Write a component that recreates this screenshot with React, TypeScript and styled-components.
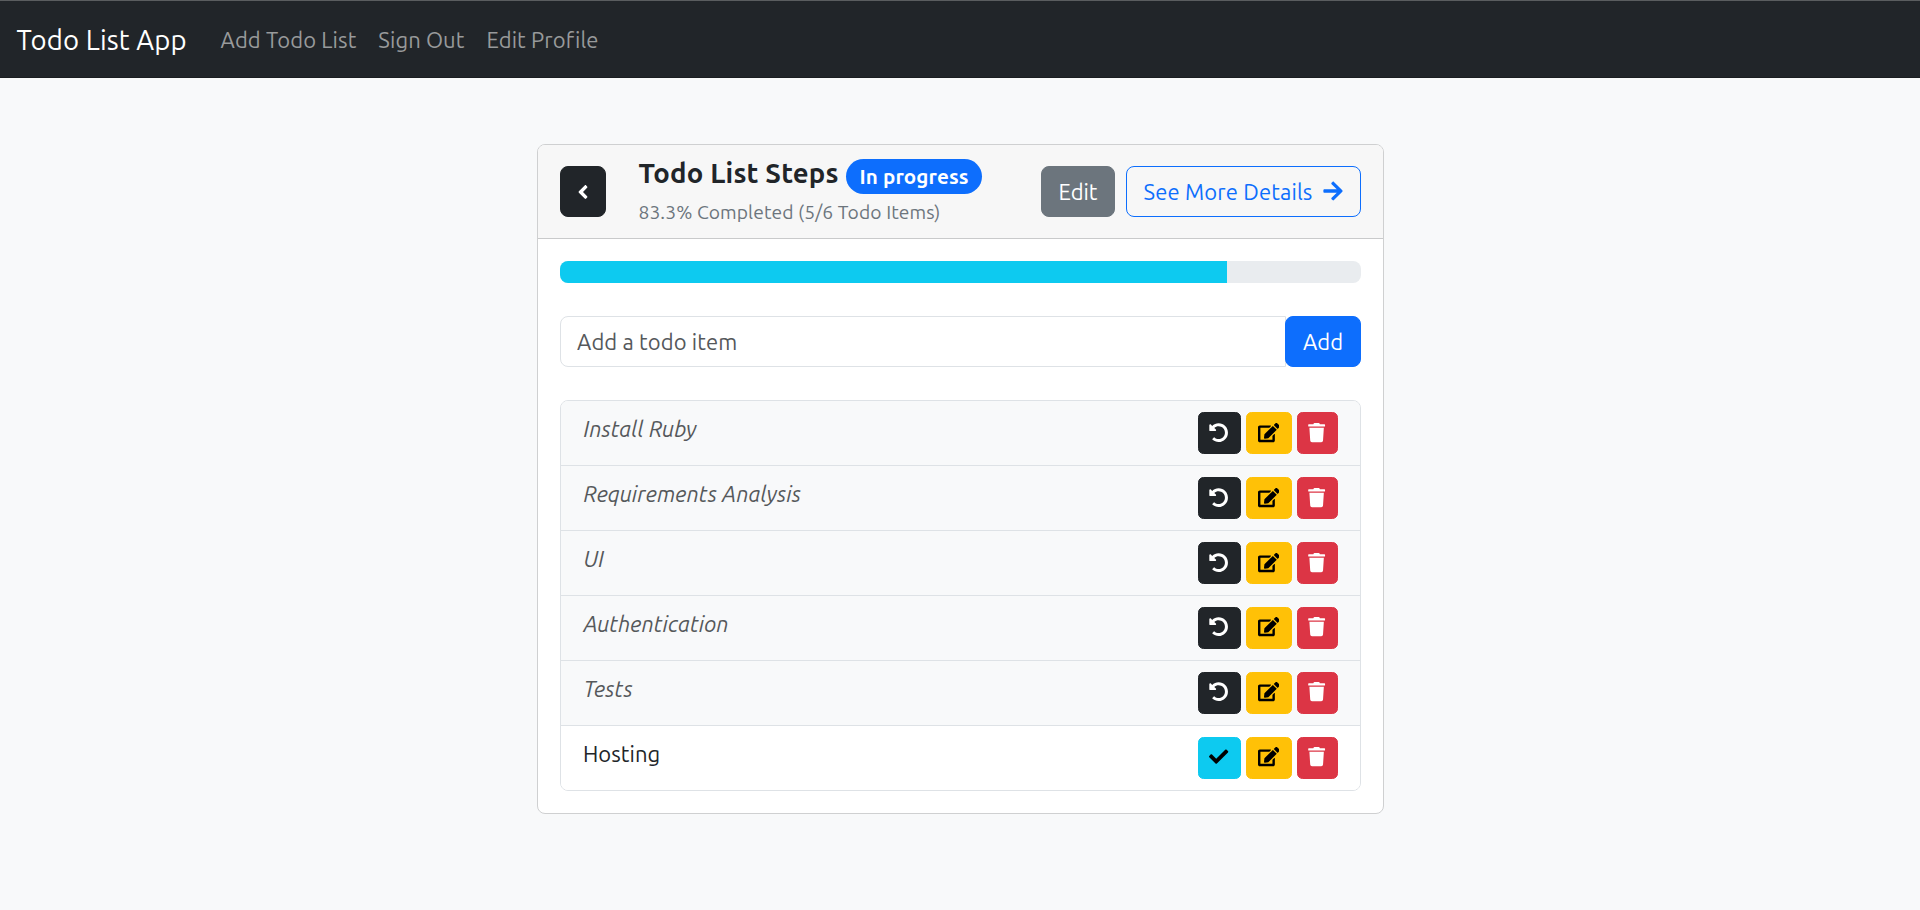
import React from "react";
import styled, { createGlobalStyle } from "styled-components";
import { FaAngleLeft, FaArrowRight, FaCheck, FaEdit, FaTrash, FaUndoAlt } from "react-icons/fa";

const GlobalStyle = createGlobalStyle`
  *, *::before, *::after { box-sizing: border-box; }
  html { font-size: 22px; }
  body {
    margin: 0;
    min-height: 910px;
    background: #f8f9fa;
    color: #212529;
    font-family: Ubuntu, "Noto Sans", sans-serif;
    font-size: 22px;
    line-height: 33px;
  }
  button, input { font: inherit; }
`;

type Tracked = { $track?: number };

const Label = styled.span<Tracked>`
  letter-spacing: ${({ $track = 0 }) => $track}px;
  margin-right: ${({ $track = 0 }) => -$track}px;
  white-space: nowrap;
`;

const Navbar = styled.nav`
  display: flex;
  align-items: center;
  height: 78px;
  padding: 1px 16.5px 0;
  border-top: 1px solid #5a5d5f;
  border-bottom: 1px solid #1a1d20;
  background: #212529;
`;

const Brand = styled.a`
  width: 204px;
  color: #fff;
  font-size: 27.5px;
`;

const NavLinks = styled.div`
  display: flex;
  gap: 22px;
  color: #989a9b;
`;

const Page = styled.main`
  display: flex;
  justify-content: center;
  padding-top: 66px;
`;

const Card = styled.section`
  width: 847px;
  margin-left: 1px;
  border: 1px solid #cfd0d1;
  border-radius: 8px;
  background: #fff;
  overflow: hidden;
`;

const CardHeader = styled.header`
  display: flex;
  align-items: center;
  height: 94px;
  padding: 0 22px;
  border-bottom: 1px solid #c9cacb;
  background: #f7f7f7;
`;

const Heading = styled.div`
  flex: 1;
  margin-left: 32.5px;
  padding-top: 2px;
`;

const TitleRow = styled.div`
  display: flex;
  align-items: center;
  height: 36px;
  gap: 7.5px;
`;

const Title = styled.h1`
  margin: -9px 0 0;
  font-size: 27.5px;
  font-weight: 700;
`;

const Badge = styled.span`
  display: flex;
  align-items: center;
  justify-content: center;
  width: 136px;
  height: 35px;
  padding-bottom: 1px;
  border-radius: 18px;
  background: #0d6efd;
  color: #fff;
  font-size: 20.6px;
  font-weight: 700;
`;

const Subtitle = styled.div`
  margin-top: 3px;
  color: #6c757d;
  font-size: 19.25px;
  line-height: 29px;
`;

const palette = {
  dark: ["#212529", "#fff", "#212529"],
  secondary: ["#6c757d", "#fff", "#6c757d"],
  primary: ["#0d6efd", "#fff", "#0d6efd"],
  outline: ["transparent", "#0d6efd", "#0d6efd"],
  info: ["#0dcaf0", "#000", "#0dcaf0"],
  warning: ["#ffc107", "#000", "#ffc107"],
  danger: ["#dc3545", "#fff", "#dc3545"],
};
type Tone = keyof typeof palette;

const Button = styled.button<{ $tone: Tone; $width: number }>`
  display: inline-flex;
  align-items: center;
  justify-content: center;
  width: ${({ $width }) => $width}px;
  height: 51px;
  padding: 0;
  border: 1px solid ${({ $tone }) => palette[$tone][2]};
  border-radius: 8px;
  background: ${({ $tone }) => palette[$tone][0]};
  color: ${({ $tone }) => palette[$tone][1]};
`;

const IconButton = styled(Button)`
  height: 42px;
  padding-right: 1px;
  border-radius: 5.5px;
  font-size: 19.25px;
`;

const EditIcon = styled(FaEdit)`
  width: 1.125em;
`;

const HeaderActions = styled.div`
  display: flex;
  gap: 11px;
`;

const ArrowIcon = styled(FaArrowRight)`
  margin: -2px -1px 0 10px;
  font-size: 22px;
`;

const CardBody = styled.div`
  padding: 22px;
`;

const Progress = styled.div`
  height: 22px;
  border-radius: 8px;
  background: #e9ecef;
  overflow: hidden;
`;

const ProgressFill = styled.div`
  height: 100%;
  background: #0dcaf0;
`;

const AddForm = styled.form`
  display: flex;
  margin: 33px 0;
`;

const ItemInput = styled.input<Tracked>`
  flex: 1;
  height: 51px;
  margin-right: -1px;
  padding: 0 16px 1px;
  border: 1px solid #dee2e6;
  border-radius: 8px 0 0 8px;
  outline: none;
  letter-spacing: ${({ $track = 0 }) => $track}px;
  &::placeholder { color: #55585b; opacity: 1; }
`;

const List = styled.ul`
  margin: 0;
  padding: 0;
  border: 1px solid #dee2e6;
  border-radius: 8px;
  list-style: none;
  overflow: hidden;
`;

const Item = styled.li<{ $done: boolean }>`
  display: flex;
  justify-content: space-between;
  height: 65px;
  padding: 11px 22px ;
  border-bottom: 1px solid #dee2e6;
  background: ${({ $done }) => ($done ? "#f8f9fa" : "#fff")};
  color: ${({ $done }) => ($done ? "#55585b" : "#212529")};
  font-style: ${({ $done }) => ($done ? "italic" : "normal")};
  & > span { padding-left: ${({ $done }) => ($done ? 0.6 : 0)}px; }
  &:last-child { height: 64px; border-bottom: 0; }
  &:nth-child(n + 4) svg { margin-bottom: 2px; }
`;

const ItemActions = styled.div`
  display: flex;
  gap: 5px;
`;

const items = [
  { text: "Install Ruby", done: true },
  { text: "Requirements Analysis", done: true },
  { text: "UI", done: true },
  { text: "Authentication", done: true },
  { text: "Tests", done: true },
  { text: "Hosting", done: false },
];
const completed = items.filter((item) => item.done).length;
const percent = ((completed / items.length) * 100).toFixed(1);

export default function App() {
  return (
    <>
      <GlobalStyle />
      <Navbar>
        <Brand><Label $track={0.15}>Todo List App</Label></Brand>
        <NavLinks>
          <Label as="a" $track={0.1}>Add Todo List</Label>
          <Label as="a" $track={0.1}>Sign Out</Label>
          <Label as="a" $track={0.1}>Edit Profile</Label>
        </NavLinks>
      </Navbar>
      <Page>
        <Card>
          <CardHeader>
            <Button $tone="dark" $width={46} aria-label="Back"><FaAngleLeft size={22} /></Button>
            <Heading>
              <TitleRow>
                <Title><Label $track={0.2}>Todo List Steps</Label></Title>
                <Badge><Label $track={0.1}>In progress</Label></Badge>
              </TitleRow>
              <Subtitle>
                <Label $track={0.08}>{`${percent}% Completed (${completed}/${items.length} Todo Items)`}</Label>
              </Subtitle>
            </Heading>
            <HeaderActions>
              <Button $tone="secondary" $width={74}><Label>Edit</Label></Button>
              <Button $tone="outline" $width={235}><Label $track={0.15}>See More Details</Label><ArrowIcon /></Button>
            </HeaderActions>
          </CardHeader>
          <CardBody>
            <Progress><ProgressFill style={{ width: `${percent}%` }} /></Progress>
            <AddForm onSubmit={(event) => event.preventDefault()}>
              <ItemInput $track={0.1} placeholder="Add a todo item" />
              <Button $tone="primary" $width={76}><Label>Add</Label></Button>
            </AddForm>
            <List>
              {items.map(({ text, done }) => (
                <Item key={text} $done={done}>
                  <Label $track={0.04}>{text}</Label>
                  <ItemActions>
                    <IconButton $tone={done ? "dark" : "info"} $width={43} aria-label={done ? "Undo" : "Complete"}>
                      {done ? <FaUndoAlt /> : <FaCheck />}
                    </IconButton>
                    <IconButton $tone="warning" $width={46} aria-label="Edit item"><EditIcon /></IconButton>
                    <IconButton $tone="danger" $width={41} aria-label="Delete item"><FaTrash /></IconButton>
                  </ItemActions>
                </Item>
              ))}
            </List>
          </CardBody>
        </Card>
      </Page>
    </>
  );
}
